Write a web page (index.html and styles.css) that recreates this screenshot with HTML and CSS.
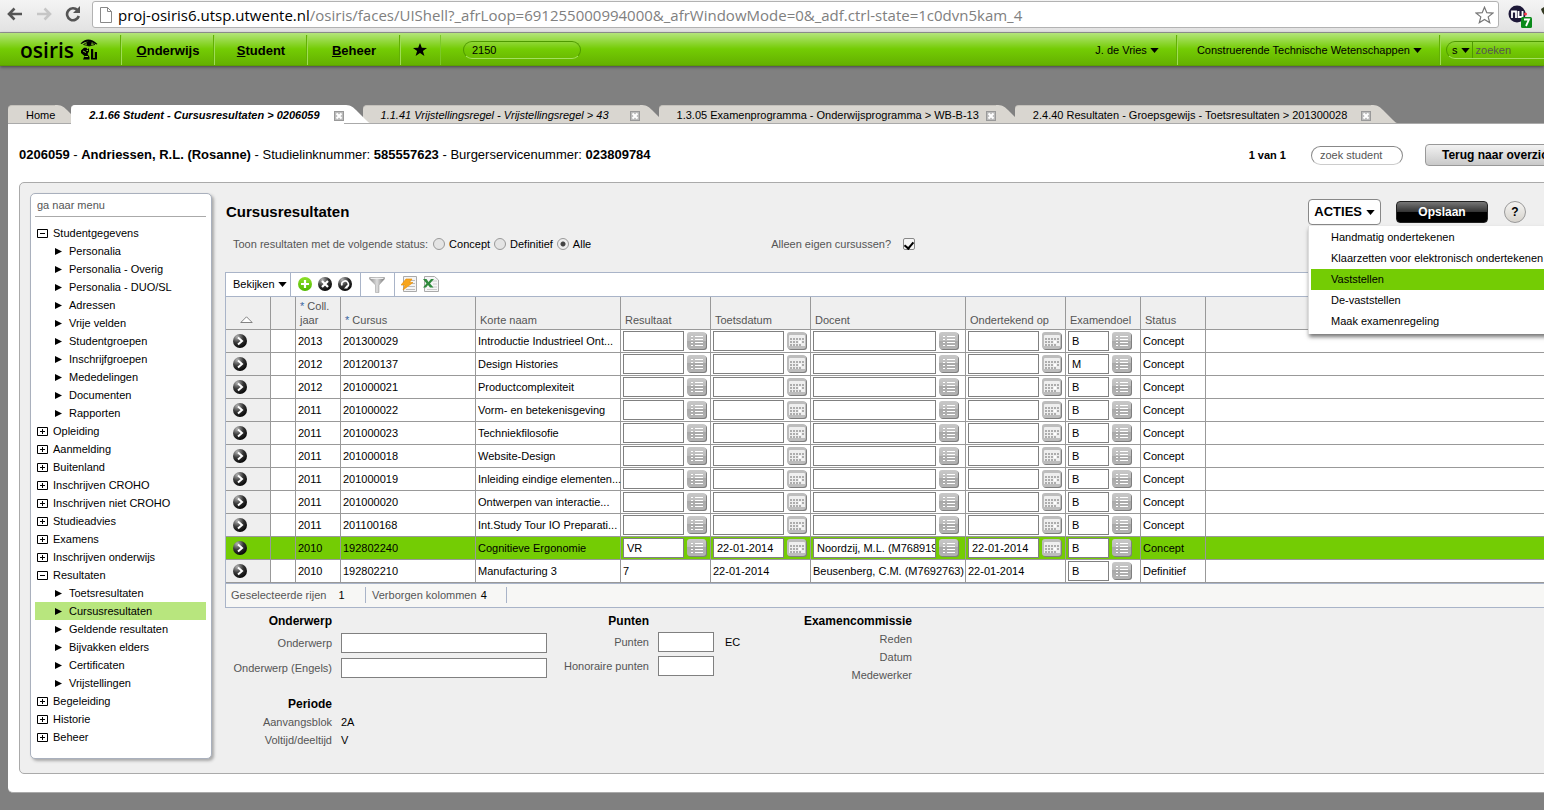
FILE: index.html
```html
<!DOCTYPE html>
<html lang="nl">
<head>
<meta charset="utf-8">
<title>Osiris - Cursusresultaten</title>
<link rel="stylesheet" href="styles.css">
</head>
<body>
<svg class="defs" aria-hidden="true">
  <defs>
    <linearGradient id="g-grey" x1="0" y1="0" x2="0" y2="1"><stop offset="0" stop-color="#c8c8c8"/><stop offset=".5" stop-color="#bcbcbc"/><stop offset=".5" stop-color="#a9a9a9"/><stop offset="1" stop-color="#b4b4b4"/></linearGradient>
    <radialGradient id="g-dark" cx=".3" cy=".2" r=".9"><stop offset="0" stop-color="#b5b5b5"/><stop offset=".5" stop-color="#333"/><stop offset="1" stop-color="#000"/></radialGradient>
    <linearGradient id="g-green" x1="0" y1="0" x2="0" y2="1"><stop offset="0" stop-color="#8fe02a"/><stop offset="1" stop-color="#4fb800"/></linearGradient>
    <linearGradient id="g-funnel" x1="0" y1="0" x2="1" y2="0"><stop offset="0" stop-color="#8a8a8a"/><stop offset=".5" stop-color="#ddd"/><stop offset="1" stop-color="#777"/></linearGradient>
  </defs>
  <symbol id="caret" viewBox="0 0 10 6"><path d="M0 0h10L5 6z"/></symbol>
  <symbol id="close" viewBox="0 0 10 10"><path d="M0 0h10v10H0z" fill="#999"/><path d="M1 1h8v8H1z" fill="#bbb"/><path d="M2.500 2.500l5 5m0-5l-5 5" stroke="#fff" stroke-width="2"/></symbol>
  <symbol id="tail" viewBox="0 0 26 18"><path d="M0 0C6 0 8 1 12 5L22 15C24 17 25 18 26 18H0z"/></symbol>
  <symbol id="list" viewBox="0 0 20 18"><rect x="1" y="1" width="19" height="17" rx="3" fill="#7f7f7f"/><rect width="19" height="17" rx="3" fill="url(#g-grey)"/><path d="M4 4.500h2M4 7.500h2M4 10.500h2M4 13.500h2M8 4.500h8M8 7.500h8M8 10.500h8M8 13.500h8" stroke="#fff"/></symbol>
  <symbol id="cal" viewBox="0 0 20 18"><rect x="1" y="1" width="19" height="17" rx="3" fill="#7f7f7f"/><rect width="19" height="17" rx="3" fill="#bdbdbd"/><path d="M2 4q0-1 1-1h14q1 0 1 1v10H2z" fill="#efefef"/><path d="M3 7h14M3 10h14M3 13h11" stroke="#adadad" stroke-width="2" stroke-dasharray="2 1"/><path d="M12 9h2v2h-2z" fill="#fff"/></symbol>
  <symbol id="go" viewBox="0 0 14 14"><circle cx="7" cy="7" r="7" fill="url(#g-dark)"/><path d="M5 3.500L9 7l-4 3.500" fill="none" stroke="#fff" stroke-width="2"/></symbol>
  <symbol id="minus" viewBox="0 0 11 9"><path d="M.5.5h10v8H.5z" fill="#fff" stroke="#000"/><path d="M3 4.500h5" stroke="#000"/></symbol>
  <symbol id="plus" viewBox="0 0 11 9"><path d="M.5.5h10v8H.5z" fill="#fff" stroke="#000"/><path d="M3 4.500h5M5.500 2v5" stroke="#000"/></symbol>
  <symbol id="arrow" viewBox="0 0 7 7"><path d="M0 0l7 3.500L0 7z"/></symbol>
</svg>

<div class="browser">
  <button class="nav" aria-label="Terug"><svg width="16" height="14" viewBox="0 0 16 14"><path d="M7.500 1.500L2 7l5.500 5.500M2.500 7H15" fill="none" stroke="#555" stroke-width="2.600"/></svg></button>
  <button class="nav" aria-label="Vooruit"><svg width="16" height="14" viewBox="0 0 16 14"><path d="M8.500 1.500L14 7l-5.500 5.500M13.500 7H1" fill="none" stroke="#c6c6c6" stroke-width="2.600"/></svg></button>
  <button class="nav" aria-label="Vernieuwen"><svg width="16" height="16" viewBox="0 0 16 16"><path d="M12.500 4.200A6 6 0 1 0 13.800 10" fill="none" stroke="#555" stroke-width="2.600"/><path d="M15 0v7H8z" fill="#555"/></svg></button>
  <div class="omnibox">
    <svg width="12" height="16" viewBox="0 0 12 16"><path d="M.5.5h7l4 4v11H.5z" fill="#fff" stroke="#888"/><path d="M7.500.5v4h4" fill="none" stroke="#888"/></svg>
    <div class="url" role="textbox" aria-label="Adres">proj-osiris6.utsp.utwente.nl<span>/osiris/faces/UIShell?_afrLoop=691255000994000&amp;_afrWindowMode=0&amp;_adf.ctrl-state=1c0dvn5kam_4</span></div>
    <svg width="19" height="18" viewBox="0 0 19 18"><path d="M9.500 1.200l2.300 5.500 6 .4-4.600 3.800 1.500 5.800-5.200-3.200-5.200 3.200 1.500-5.800L1.200 7.100l6-.4z" fill="#fff" stroke="#777" stroke-width="1.200"/></svg>
  </div>
  <div class="extensions">
    <svg width="24" height="24" viewBox="0 0 24 24"><circle cx="9" cy="9" r="8.500" fill="#1d1838"/><path d="M4 13V6.500h4V13M10.500 6v6h4V6" fill="none" stroke="#fff" stroke-width="1.800"/><circle cx="17.500" cy="9" r="1.500" fill="#f34"/><rect x="13" y="12" width="11" height="11" rx="1.500" fill="#0a8a1a"/><path d="M16 14.500h5l-3 6.500" fill="none" stroke="#fff" stroke-width="1.800"/></svg>
    <svg width="10" height="12" viewBox="0 0 10 12"><path d="M0 4l3-2 7-1v10H4L1 7z" fill="#333a22"/></svg>
  </div>
</div>

<header class="topbar">
  <div class="logo"><span>osiris</span>
    <svg width="18" height="21" viewBox="0 0 18 21"><path d="M.5 4.500Q8-3.500 17.500 5l-1.200.4Q8-.2 1.500 5z"/><path d="M3.500 5.500Q9 1 15 5.500 9 8.500 3.500 5.500z" fill="none" stroke="#000" stroke-width=".8"/><circle cx="9" cy="4.500" r="2.500"/><path d="M1 11.500l3-2.700h2.500l1 1.700L9 9v3.500L7.500 15l2 3v2.500H3L4.500 17 1 14zM11 10h2.200v9h1.600v-6H17v7.500h-6z"/><path d="M3 12l3 1.500m-1.500 4h3.500M6.500 11.500h1.500" stroke="#7fc820"/></svg>
  </div>
  <nav class="mainnav">
    <a href="#"><u>O</u>nderwijs</a><a href="#"><u>S</u>tudent</a><a href="#"><u>B</u>eheer</a>
    <a href="#" class="fav" aria-label="Favorieten"><svg width="14" height="13" viewBox="0 0 14 13"><path d="M7 0l1.800 4.700L14 5 9.900 8l1.500 5L7 10.100 2.600 13l1.500-5L0 5l5.200-.3z"/></svg></a>
  </nav>
  <input class="pill code" aria-label="Schermcode" value="2150">
  <div class="account">
    <button>J. de Vries <svg class="caret"><use href="#caret"/></svg></button>
    <button class="faculty">Construerende Technische Wetenschappen <svg class="caret"><use href="#caret"/></svg></button>
    <div class="pill search"><button aria-label="Zoek in studenten">s <svg class="caret"><use href="#caret"/></svg></button><input aria-label="Zoeken" placeholder="zoeken"></div>
  </div>
</header>

<div class="tabs" role="tablist">
  <a class="tab" role="tab" href="#"><span>Home</span><svg class="tail"><use href="#tail"/></svg></a>
  <a class="tab active" role="tab" aria-selected="true" href="#"><span>2.1.66 Student - Cursusresultaten &gt; 0206059</span><svg class="close"><use href="#close"/></svg><svg class="tail"><use href="#tail"/></svg></a>
  <a class="tab italic" role="tab" href="#"><span>1.1.41 Vrijstellingsregel - Vrijstellingsregel &gt; 43</span><svg class="close"><use href="#close"/></svg><svg class="tail"><use href="#tail"/></svg></a>
  <a class="tab tight" role="tab" href="#"><span>1.3.05 Examenprogramma - Onderwijsprogramma &gt; WB-B-13</span><svg class="close"><use href="#close"/></svg><svg class="tail"><use href="#tail"/></svg></a>
  <a class="tab" role="tab" href="#"><span>2.4.40 Resultaten - Groepsgewijs - Toetsresultaten &gt; 201300028</span><svg class="close"><use href="#close"/></svg><svg class="tail"><use href="#tail"/></svg></a>
</div>

<div class="page">
  <div class="student">
    <p><b>0206059</b> - <b>Andriessen, R.L. (Rosanne)</b> - Studielinknummer: <b>585557623</b> - Burgerservicenummer: <b>023809784</b></p>
    <div class="finder">
      <b>1 van 1</b>
      <input aria-label="Zoek student" placeholder="zoek student">
      <button>Terug naar overzicht</button>
    </div>
  </div>

  <div class="panel">
    <aside class="sidebar">
      <input aria-label="Ga naar menu" placeholder="ga naar menu">
      <ul class="tree" id="tree"></ul>
    </aside>

    <main>
      <div class="titlebar">
        <h1>Cursusresultaten</h1>
        <div class="actions">
          <div class="menuwrap">
            <button class="acties">ACTIES <svg class="caret"><use href="#caret"/></svg></button>
            <ul class="menu" role="menu">
              <li role="menuitem">Handmatig ondertekenen</li>
              <li role="menuitem">Klaarzetten voor elektronisch ondertekenen</li>
              <li role="menuitem" class="hover">Vaststellen</li>
              <li role="menuitem">De-vaststellen</li>
              <li role="menuitem">Maak examenregeling</li>
            </ul>
          </div>
          <button class="save">Opslaan</button>
          <button class="help" aria-label="Help">?</button>
        </div>
      </div>

      <form class="filters">
        <span class="hint">Toon resultaten met de volgende status:</span>
        <label><input type="radio" name="status">Concept</label>
        <label><input type="radio" name="status">Definitief</label>
        <label><input type="radio" name="status" checked>Alle</label>
        <label class="own"><span>Alleen eigen cursussen?</span><input type="checkbox" checked></label>
      </form>

      <div class="grid">
        <div class="toolbar">
          <div class="view"><button>Bekijken <svg class="caret"><use href="#caret"/></svg></button></div>
          <div class="icons">
            <button aria-label="Toevoegen"><svg width="14" height="14" viewBox="0 0 14 14"><circle cx="7" cy="7" r="7" fill="url(#g-green)"/><path d="M7 3v8M3 7h8" stroke="#fff" stroke-width="2.200"/></svg></button>
            <button aria-label="Verwijderen"><svg width="14" height="14" viewBox="0 0 14 14"><circle cx="7" cy="7" r="7" fill="url(#g-dark)"/><path d="M4 4l6 6m0-6l-6 6" stroke="#fff" stroke-width="2.200"/></svg></button>
            <button aria-label="Herstellen"><svg width="14" height="14" viewBox="0 0 14 14"><circle cx="7" cy="7" r="7" fill="url(#g-dark)"/><path d="M4 8.500A3.300 3.300 0 1 1 9 10" fill="none" stroke="#fff" stroke-width="1.600"/><path d="M9.500 7.500v4H6z" fill="#fff"/></svg></button>
          </div>
          <div class="filter"><button aria-label="Filter"><svg width="16" height="16" viewBox="0 0 16 16"><path d="M.5.500h15v1.500L10 8v7.500H6.500V8L.5 2z" fill="url(#g-funnel)" stroke="#999" stroke-width=".5"/><path d="M1.500 1.500h13" stroke="#eee"/></svg></button></div>
          <div class="export">
            <button aria-label="Snel bewerken"><svg width="16" height="16" viewBox="0 0 16 16"><path d="M2.500.5h13v15h-13z" fill="#f4f4f4" stroke="#aaa"/><path d="M9 4.500h5M9 7.500h5M7 10.500h7M5 13.500h9" stroke="#bbb"/><path d="M5 3h6L8.500 6.500H12L2 14l2-5H0z" fill="#f7a51c" stroke="#e88c00" stroke-width=".6"/></svg></button>
            <button aria-label="Exporteren naar Excel"><svg width="16" height="16" viewBox="0 0 16 16"><path d="M1.500.5h10l4 3.500v11.500h-14z" fill="#f6f6f6" stroke="#aaa"/><path d="M9 5h5M10 8h4M9 11h5M4 13.500h10" stroke="#ccc"/><path d="M0 3h3.500L5.500 6 8 3h3L7 7.500l3.500 4H7L5 9l-2 2.500H0l3.500-4z" fill="#2f8a3c"/></svg></button>
          </div>
        </div>
        <table>
          <colgroup><col class="c45"><col class="c25"><col class="c45"><col class="c135"><col class="c145"><col class="c90"><col class="c100"><col class="c155"><col class="c100"><col class="c75"><col class="c65"><col></colgroup>
          <thead><tr>
            <th class="sort"><svg width="13" height="7" viewBox="0 0 13 7"><path d="M.8 6.500L6.500.8l5.700 5.700z" fill="#fff" stroke="#666" stroke-width=".8"/></svg></th><th></th>
            <th><i>*</i> Coll.<br>jaar</th><th><i>*</i> Cursus</th><th>Korte naam</th><th>Resultaat</th><th>Toetsdatum</th><th>Docent</th><th>Ondertekend op</th><th>Examendoel</th><th>Status</th><th></th>
          </tr></thead>
          <tbody id="rows"></tbody>
        </table>
        <div class="statusbar">
          <div>Geselecteerde rijen <b>1</b></div><div class="hidden-cols">Verborgen kolommen <b>4</b></div>
        </div>
      </div>

      <div class="details">
        <section class="subject">
          <h2>Onderwerp</h2>
          <label for="ond">Onderwerp</label><input id="ond">
          <label for="onden">Onderwerp (Engels)</label><input id="onden">
        </section>
        <section class="points">
          <h2>Punten</h2>
          <label for="pt">Punten</label><div class="unit"><input id="pt"><span>EC</span></div>
          <label for="hpt">Honoraire punten</label><input id="hpt">
        </section>
        <section class="plain board">
          <h2>Examencommissie</h2>
          <span>Reden</span><span>Datum</span><span>Medewerker</span>
        </section>
        <section class="plain period">
          <h2>Periode</h2>
          <span>Aanvangsblok</span><b>2A</b>
          <span>Voltijd/deeltijd</span><b>V</b>
        </section>
      </div>
    </main>
  </div>
</div>
<script src="app.js"></script>
</body>
</html>
```
FILE: styles.css
```css
* { box-sizing: border-box; }
html { overflow: hidden; background: #808080; }
body { margin: 0; overflow: hidden; font: 11px/14px "Liberation Sans", Arial, sans-serif; color: #000; }
button, input { font: inherit; color: inherit; }
button { border: 0; padding: 0; background: none; white-space: nowrap; }
h1, h2, p, ul { margin: 0; padding: 0; }
ul { list-style: none; }
a { color: inherit; text-decoration: none; }
svg { display: block; flex: none; }
::placeholder { color: #555; opacity: 1; }
.defs { position: absolute; width: 0; height: 0; }
.caret { display: inline-block; width: 9px; height: 5px; vertical-align: middle; }

/* browser chrome */
.browser { display: flex; align-items: center; height: 33px; padding: 0 0 4px 7px; background: linear-gradient(#f4f4f4, #e2e2e2); border-bottom: 1px solid #999; }
.nav { width: 16px; margin-right: 13px; }
.nav:nth-child(3) { margin-right: 11px; }
.omnibox { flex: 1; display: flex; align-items: center; height: 27px; margin-top: 1px; padding: 0 4px 0 7px; background: #fff; border: 1px solid #b2b2b2; border-radius: 3px; }
.url { flex: 1; margin-left: 6px; overflow: hidden; font: 15px/24px "Open Sans", sans-serif; white-space: nowrap; }
.url span { color: #808080; }
.extensions { display: flex; gap: 9px; width: 45px; padding: 5px 0 0 9px; overflow: hidden; }

/* green bar */
.topbar { position: relative; display: flex; align-items: center; height: 33px; padding-top: 1px; background: linear-gradient(#b4e57c, #74cc04 50%, #64b000); border-bottom: 1px solid #5ca000; box-shadow: 0 1px 3px #444; }
.logo { display: flex; align-items: center; gap: 6px; width: 121px; padding-left: 20px; font: 600 21px/24px "Open Sans", sans-serif; }
.mainnav { display: flex; }
.mainnav a { width: 93px; height: 30px; border-left: 1px solid #9fdc55; box-shadow: -1px 0 #62b004; font-size: 13px; line-height: 32px; font-weight: bold; text-align: center; }
.mainnav .fav { display: flex; align-items: center; justify-content: center; width: 41px; padding-right: 2px; border-right: 1px solid #7cc828; }
.pill { height: 18px; border: 1px solid #4f9a00; border-bottom-color: #a5e060; border-radius: 9px; background: transparent; }
.code { width: 118px; margin-left: 22px; padding: 0 8px; }
.account { display: flex; align-items: center; margin-left: auto; }
.account > button { height: 30px; padding: 0 17px 0 20px; border-right: 1px solid #62b004; box-shadow: 1px 0 #9fdc55; }
.account .search { display: flex; width: 118px; margin: 0 -20px 0 6px; }
.search button { padding: 0 2px 0 5px; border-right: 1px solid #4f9a00; }
.search input { width: 70px; padding: 0 3px; border: 0; background: transparent; }

/* document tabs */
.tabs { display: flex; margin: 39px 0 0 8px; }
.tab { position: relative; display: flex; align-items: center; height: 18px; margin-right: -7px; padding-left: 18px; line-height: 18px; white-space: nowrap; }
.tab::before { content: ""; position: absolute; inset: 0 26px 0 0; background: #d9d6d0; border-top: 1px solid #c4c1bb; border-radius: 4px 0 0 0; }
.tab span, .tab .close { position: relative; }
.tab span { padding-top: 2px; }
.tab .close { width: 10px; height: 10px; margin: 4px 0 0 14px; }
.tight .close { margin-left: 7px; }
.tail { width: 26px; height: 18px; fill: #d9d6d0; }
.tab:first-child { margin-right: -10px; }
.active { z-index: 1; font-weight: bold; font-style: italic; }
.active::before { bottom: -1px; background: #fff; border-color: #fff; }
.active .tail { fill: #fff; }
.italic { font-style: italic; }
.italic span { min-width: 235px; }

/* page */
.page { margin: 0 -20px 17px 8px; padding: 0 0 18px 11px; background: #fff; border-top: 1px solid #aaa; border-bottom: 1px solid #aaa; border-radius: 0 0 0 5px; }
.student { display: flex; justify-content: space-between; align-items: center; height: 58px; padding-top: 4px; }
.student p { font-size: 13px; line-height: 16px; white-space: nowrap; }
.finder { display: flex; align-items: center; }
.finder input { width: 92px; height: 19px; margin: 0 22px 0 25px; padding: 0 8px; border: 1px solid #888; border-bottom-color: #ccc; border-radius: 10px; background: #fff; }
.finder button { width: 139px; height: 22px; padding-left: 16px; border: 1px solid #999; border-radius: 4px; background: linear-gradient(#f2f2f2, #c9c9c9); font-size: 12px; font-weight: bold; text-align: left; }

.panel { display: flex; align-items: flex-start; gap: 13px; padding: 10px 0 14px 10px; background: #efefef; border: 1px solid #aaa; border-radius: 5px 0 0 5px; }
.sidebar { width: 182px; padding: 3px 5px 12px 4px; background: #fff; border: 1px solid #a9b0bd; border-radius: 5px; box-shadow: 2px 2px 3px #aaa; }
.sidebar input { display: block; width: 100%; height: 20px; margin-bottom: 7px; padding: 0 2px 4px; border: 0; border-bottom: 1px solid #aaa; background: transparent; }
.tree li { display: flex; align-items: center; gap: 5px; height: 18px; padding-left: 2px; }
.tree svg { width: 11px; height: 9px; }
.tree .sub { gap: 7px; padding-left: 20px; }
.tree .sub svg { width: 7px; height: 7px; }
.tree .current { background: #b8e67e; }

main { flex: 1; min-width: 0; }
.titlebar { display: flex; justify-content: space-between; align-items: center; height: 38px; }
h1 { padding-left: 1px; font-size: 15px; line-height: 16px; }
.actions { display: flex; align-items: center; padding-right: 37px; }
.menuwrap { position: relative; }
.acties { width: 73px; height: 26px; border: 1px solid #888; border-radius: 4px; background: #fff; font-size: 13px; font-weight: bold; }
.menu { position: absolute; z-index: 3; top: 27px; left: 0; width: 270px; padding: 1px 0 2px 2px; background: #fff; border-left: 1px solid #ddd; box-shadow: 1px 3px 4px #777; }
.menu li { height: 21px; padding-left: 20px; line-height: 21px; white-space: nowrap; }
.menu .hover { background: #74cc04; }
.save { width: 92px; height: 22px; margin: 0 16px 0 15px; border: 1px solid #222; border-radius: 4px; background: linear-gradient(#777, #333 49%, #000 50%, #000); color: #fff; font-size: 12px; font-weight: bold; }
.help { width: 22px; height: 22px; border: 1px solid #999; border-radius: 50%; background: linear-gradient(#f5f4f2, #d6d3cd); font-size: 12px; font-weight: bold; }

.filters { display: flex; align-items: center; height: 26px; margin-bottom: 15px; padding-left: 8px; }
.filters .hint { margin-right: 5px; }
.hint, .own span { color: #555; }
.filters label { display: flex; align-items: center; gap: 4px; margin-right: 4px; }
.filters input { appearance: none; width: 12px; height: 12px; margin: 0; border: 1px solid #999; border-radius: 50%; background: #e4e4e4; }
.filters input:checked { background: radial-gradient(#444 0 2px, #eee 3px); }
.filters .own { margin-left: 176px; gap: 12px; }
.own input[type] { display: grid; place-items: center; border-color: #888; border-radius: 2px; background: #f6f6f6; }
.own input:checked::before { content: ""; width: 4px; height: 7px; border: solid #000; border-width: 0 2px 2px 0; transform: rotate(40deg); }

/* results grid */
.grid { border: 1px solid #a9b4c8; border-right: 0; }
.toolbar { display: flex; height: 24px; background: #fff; border-bottom: 1px solid #a9b4c8; }
.toolbar > div { display: flex; align-items: center; gap: 6px; padding: 0 6px 2px 7px; border-right: 1px solid #a9b4c8; }
.toolbar .view { padding: 0 3px 2px 7px; }
.toolbar .icons { padding-right: 8px; }
.toolbar .filter { padding: 0 9px 0 8px; }
.toolbar .export { border: 0; padding-left: 6px; }
table { width: 100%; table-layout: fixed; border-collapse: separate; border-spacing: 0; background: #fff; }
.c25 { width: 25px; } .c45 { width: 45px; } .c65 { width: 65px; } .c75 { width: 75px; } .c90 { width: 90px; } .c100 { width: 100px; } .c135 { width: 135px; } .c145 { width: 145px; } .c155 { width: 155px; }
th, td { border: solid #999; border-width: 0 1px 1px 0; white-space: nowrap; text-align: left; }
th { height: 33px; padding: 0 4px 2px; background: #efefef; color: #555; font-weight: normal; vertical-align: bottom; }
th i { color: #3a66a0; font-style: normal; }
.sort svg { margin: 0 0 4px 10px; }
td { height: 23px; padding: 0 0 0 2px; }
td:first-child { padding-left: 7px; background: #efefef; }
td:first-child svg { width: 14px; height: 14px; }
.selected td, .selected td:first-child { background: #74cc04; }
.field { display: flex; align-items: center; gap: 3px; padding-right: 3px; }
.field input { flex: 1; min-width: 0; height: 20px; padding: 0 0 0 3px; border: 1px solid #808080; background: #fff; }
.field svg { width: 20px; height: 18px; }
td:nth-child(8) .field { padding-right: 6px; }
td:nth-child(10) .field { padding-right: 8px; }
.statusbar { display: flex; align-items: center; height: 24px; padding-bottom: 1px; background: #f7f7f5; border-top: 1px solid #a9b4c8; color: #555; }
.statusbar div { width: 140px; height: 16px; padding-left: 5px; border-right: 1px solid #a9b4c8; line-height: 16px; }
.statusbar .hidden-cols { width: 141px; padding-left: 6px; }
.statusbar b { margin-left: 9px; color: #000; font-weight: normal; }
.statusbar .hidden-cols b { margin-left: 1px; }

/* details */
.details { display: grid; grid-template-columns: 322px 233px 1fr; padding-top: 6px; }
h2 { font-size: 12px; line-height: 14px; text-align: right; }
.details section { display: grid; align-content: start; justify-content: start; align-items: center; column-gap: 9px; }
.details label, .plain span { color: #555; text-align: right; white-space: nowrap; }
.subject { grid-template-columns: 107px 206px; row-gap: 5px; }
.points { grid-template-columns: 102px 56px; row-gap: 4px; }
.details h2, .details label, .plain span { grid-column: 1; }
.details input { width: 100%; height: 20px; padding: 0 3px; border: 1px solid #808080; background: #fff; }
.unit { display: flex; align-items: center; gap: 11px; }
.unit input { flex: none; }
.plain h2 { margin-bottom: 2px; }
.plain span, .plain b { line-height: 18px; font-weight: normal; }
.board { grid-template-columns: 132px; }
.period { grid-template-columns: 107px 206px; padding-top: 13px; }
```
FILE: app.js
```javascript
const use = id => `<svg><use href="#${id}"/></svg>`;

const tree = [
  ['Studentgegevens', ['Personalia', 'Personalia - Overig', 'Personalia - DUO/SL', 'Adressen', 'Vrije velden', 'Studentgroepen', 'Inschrijfgroepen', 'Mededelingen', 'Documenten', 'Rapporten']],
  ['Opleiding'], ['Aanmelding'], ['Buitenland'], ['Inschrijven CROHO'], ['Inschrijven niet CROHO'],
  ['Studieadvies'], ['Examens'], ['Inschrijven onderwijs'],
  ['Resultaten', ['Toetsresultaten', 'Cursusresultaten', 'Geldende resultaten', 'Bijvakken elders', 'Certificaten', 'Vrijstellingen']],
  ['Begeleiding'], ['Historie'], ['Beheer'],
];

document.getElementById('tree').innerHTML = tree.map(([name, items]) =>
  `<li>${use(items ? 'minus' : 'plus')}<a href="#">${name}</a></li>` +
  (items || []).map(item =>
    `<li class="sub${item === 'Cursusresultaten' ? ' current' : ''}">${use('arrow')}<a href="#">${item}</a></li>`).join('')
).join('');

const courses = [
  ['2013', '201300029', 'Introductie Industrieel Ont...', 'B'],
  ['2012', '201200137', 'Design Histories', 'M'],
  ['2012', '201000021', 'Productcomplexiteit', 'B'],
  ['2011', '201000022', 'Vorm- en betekenisgeving', 'B'],
  ['2011', '201000023', 'Techniekfilosofie', 'B'],
  ['2011', '201000018', 'Website-Design', 'B'],
  ['2011', '201000019', 'Inleiding eindige elementen...', 'B'],
  ['2011', '201000020', 'Ontwerpen van interactie...', 'B'],
  ['2011', '201100168', 'Int.Study Tour IO Preparati...', 'B'],
  ['2010', '192802240', 'Cognitieve Ergonomie', 'B', 'VR', '22-01-2014', 'Noordzij, M.L. (M768919', '22-01-2014'],
  ['2010', '192802210', 'Manufacturing 3', 'B', '7', '22-01-2014', 'Beusenberg, C.M. (M7692763)', '22-01-2014', true],
];

const field = (label, value, icon) =>
  `<div class="field"><input aria-label="${label}" value="${value}"><button aria-label="Kies ${label}">${use(icon)}</button></div>`;

document.getElementById('rows').innerHTML = courses.map(
  ([year, code, name, goal, result = '', date = '', teacher = '', signed = '', final]) => {
    const cell = (label, value, icon) => `<td>${final ? value : field(label, value, icon)}</td>`;
    return `<tr class="${result === 'VR' ? 'selected' : ''}"><td>${use('go')}</td><td></td><td>${year}</td><td>${code}</td><td>${name}</td>` +
      cell('Resultaat', result, 'list') + cell('Toetsdatum', date, 'cal') + cell('Docent', teacher, 'list') + cell('Ondertekend op', signed, 'cal') +
      `<td>${field('Examendoel', goal, 'list')}</td><td>${final ? 'Definitief' : 'Concept'}</td><td></td></tr>`;
  }).join('');
```
